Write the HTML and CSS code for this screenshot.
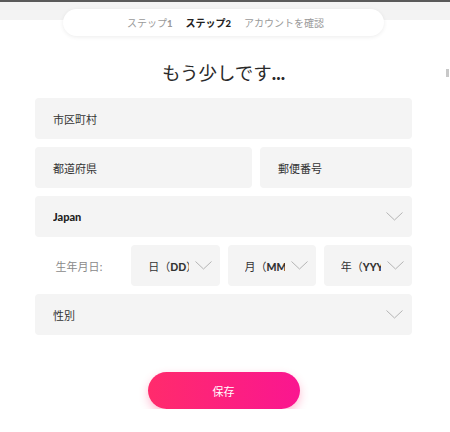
FILE: index.html
```html
<!DOCTYPE html>
<html lang="ja">

<head>
    <meta charset="UTF-8">
    <meta name="viewport" content="width=device-width, initial-scale=1.0">
    <title>もう少しです...</title>
    <link rel="stylesheet" href="styles.css">
</head>

<body>
    <div class="top">
        <div class="steps">
            <span class="step">ステップ<b>1</b></span>
            <span class="step current">ステップ<b>2</b></span>
            <span class="step">アカウントを確認</span>
        </div>
    </div>

    <span class="close"></span>

    <div class="title">もう少しです<b>...</b></div>

    <div class="form">
        <div class="field">市区町村</div>

        <div class="row">
            <div class="field">都道府県</div>
            <div class="field small">郵便番号</div>
        </div>

        <div class="field select">
            <span class="value country">Japan</span>
            <svg class="chevron" width="17" height="9" viewBox="0 0 17 9"><path d="M0.5 0.5 L8.5 8 L16.5 0.5" fill="none" stroke="#b4b4b4" stroke-width="1"/></svg>
        </div>

        <div class="birth">
            <div class="birth-label">生年月日:</div>
            <div class="field select short">
                <span class="value">日（<b>DD</b>）</span>
                <svg class="chevron" width="17" height="9" viewBox="0 0 17 9"><path d="M0.5 0.5 L8.5 8 L16.5 0.5" fill="none" stroke="#b4b4b4" stroke-width="1"/></svg>
            </div>
            <div class="field select short">
                <span class="value">月（<b>MM</b>）</span>
                <svg class="chevron" width="17" height="9" viewBox="0 0 17 9"><path d="M0.5 0.5 L8.5 8 L16.5 0.5" fill="none" stroke="#b4b4b4" stroke-width="1"/></svg>
            </div>
            <div class="field select short">
                <span class="value">年（<b>YYYY</b>）</span>
                <svg class="chevron" width="17" height="9" viewBox="0 0 17 9"><path d="M0.5 0.5 L8.5 8 L16.5 0.5" fill="none" stroke="#b4b4b4" stroke-width="1"/></svg>
            </div>
        </div>

        <div class="field select">
            <span class="value">性別</span>
            <svg class="chevron" width="17" height="9" viewBox="0 0 17 9"><path d="M0.5 0.5 L8.5 8 L16.5 0.5" fill="none" stroke="#b4b4b4" stroke-width="1"/></svg>
        </div>
    </div>

    <div class="actions">
        <div class="button">保存</div>
    </div>
</body>

</html>
```

FILE: styles.css
```css
body * {
    box-sizing: border-box;
}

body {
    margin: 0;
    position: relative;
    font-family: "Noto Sans CJK JP", "Noto Sans", sans-serif;
    color: #333333;
    background: #ffffff;
}

.top {
    border-top: 2px solid #5a5a5a;
    background: linear-gradient(#f3f3f3 0 18px, #ffffff 18px);
    padding-top: 7px;
    display: flex;
    justify-content: center;
    padding-right: 3px;
}

.steps {
    width: 321px;
    height: 27px;
    border-radius: 14px;
    background: #ffffff;
    box-shadow: 0 1px 4px rgba(0, 0, 0, 0.08);
    display: flex;
    align-items: center;
    justify-content: center;
    gap: 13px;
    font-size: 10px;
    color: #9a9a9a;
    padding-left: 4px;
}

.step b {
    font-family: "Lato", sans-serif;
    font-weight: 900;
    font-size: 9.5px;
}

.step.current {
    color: #222222;
    font-weight: 700;
}

.close {
    position: absolute;
    right: 1px;
    top: 69px;
    width: 3px;
    height: 8px;
    background: #c8c8c8;
}

.title {
    margin-top: 24px;
    text-align: center;
    font-size: 18.5px;
    line-height: 24px;
    color: #2a2a2a;
    padding-right: 3px;
}

.title b {
    font-family: "Lato", sans-serif;
    font-weight: 900;
}

.form {
    margin: 13px 0 0 35px;
    width: 377px;
    display: flex;
    flex-direction: column;
    gap: 8px;
}

.row {
    display: flex;
    gap: 8px;
}

.row .field {
    flex: 1;
}

.row .field.small {
    flex: 0 0 152px;
}

.field {
    height: 41px;
    background: #f4f4f4;
    border-radius: 4px;
    display: flex;
    align-items: center;
    padding: 0 9px 0 18px;
    font-size: 11px;
    color: #333333;
}

.select .value {
    flex: 1;
    min-width: 0;
    white-space: nowrap;
    overflow: hidden;
}

.select .value b {
    font-family: "Lato", sans-serif;
    font-weight: 900;
    font-size: 10.5px;
}

.country {
    font-family: "Lato", sans-serif;
    font-weight: 900;
    color: #1e1e1e;
}

.chevron {
    flex: none;
    margin-left: 6px;
}

.birth {
    display: grid;
    grid-template-columns: repeat(4, minmax(0, 1fr));
    gap: 8px;
}

.birth-label {
    display: flex;
    align-items: center;
    justify-content: center;
    font-size: 11px;
    color: #8a8a8a;
}

.field.short {
    padding: 0 8px 0 17px;
}

.actions {
    display: flex;
    justify-content: center;
    margin-top: 37px;
    padding-right: 3px;
}

.button {
    width: 152px;
    height: 37px;
    border-radius: 19px;
    background: linear-gradient(90deg, #ff2b6c, #fa1690);
    color: #ffffff;
    font-size: 11px;
    display: flex;
    align-items: center;
    justify-content: center;
    box-shadow: 0 4px 10px rgba(255, 40, 110, 0.3);
    cursor: pointer;
}
```
